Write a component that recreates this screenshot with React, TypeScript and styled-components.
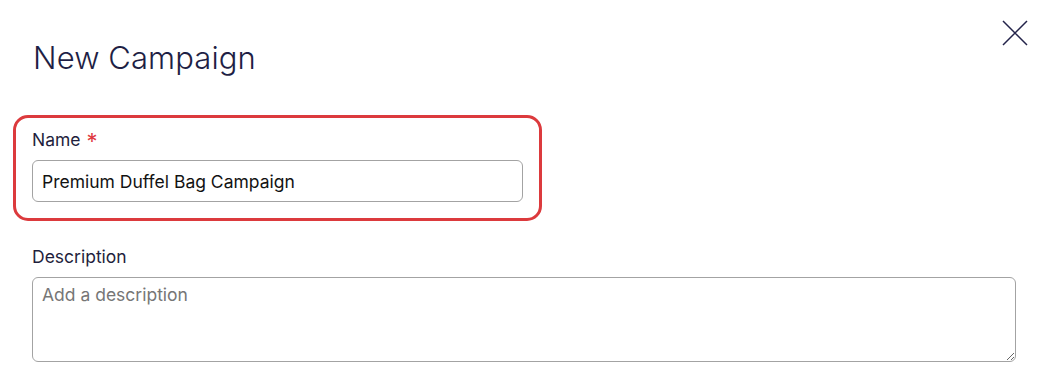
import styled, { createGlobalStyle } from "styled-components";

const GlobalStyle = createGlobalStyle`
  body {
    margin: 0;
    background: #ffffff;
    font-family: Inter, "Noto Sans", sans-serif;
    color: #1c1c3c;
  }
`;

const Dialog = styled.div`
  width: 1048px;
  height: 373px;
  box-sizing: border-box;
  padding: 0 32px 0 13px;
  position: relative;
  overflow: hidden;
`;

const Title = styled.h1`
  margin: 0;
  padding: 34px 0 0 20px;
  font-size: 31px;
  font-weight: 300;
  line-height: 48px;
  color: #1f1f45;
  letter-spacing: 0.1px;
`;

const CloseButton = styled.button`
  position: absolute;
  top: 19px;
  right: 19px;
  width: 28px;
  height: 28px;
  padding: 0;
  border: none;
  background: none;
  display: flex;
  align-items: center;
  justify-content: center;
  cursor: pointer;
`;

const Field = styled.div<{ $highlight?: boolean }>`
  display: flex;
  flex-direction: column;
  gap: 8px;
  box-sizing: border-box;
  width: ${(p) => (p.$highlight ? "529px" : "auto")};
  padding: ${(p) => (p.$highlight ? "10px 16px 16px 16px" : "0 0 0 19px")};
  border: ${(p) => (p.$highlight ? "3px solid #dc3a3d" : "none")};
  border-radius: 15px;
  margin-top: ${(p) => (p.$highlight ? "33px" : "24px")};
`;

const Label = styled.label`
  font-size: 17.5px;
  line-height: 24px;
  color: #1f1f3d;
  display: flex;
  gap: 6px;
  align-items: center;
`;

const Required = styled.span`
  color: #e0393e;
  font-size: 22px;
  line-height: 16px;
  position: relative;
  top: 1px;
`;

const TextInput = styled.input`
  height: 42px;
  box-sizing: border-box;
  border: 1px solid #a3a3a3;
  border-radius: 6px;
  padding: 0 9px;
  font-family: Inter, "Noto Sans", sans-serif;
  font-size: 17.5px;
  color: #121212;
  outline: none;
`;

const TextArea = styled.textarea`
  height: 85px;
  box-sizing: border-box;
  border: 1px solid #a3a3a3;
  border-radius: 6px;
  padding: 7px 9px;
  font-family: Inter, "Noto Sans", sans-serif;
  font-size: 17.5px;
  line-height: 20px;
  color: #121212;
  resize: vertical;
  outline: none;
  &::placeholder {
    color: #767676;
  }
`;

export default function App() {
  return (
    <>
      <GlobalStyle />
      <Dialog>
        <Title>New Campaign</Title>
        <CloseButton aria-label="Close">
          <svg width="26" height="26" viewBox="0 0 26 26" fill="none">
            <path d="M1 1L25 25M25 1L1 25" stroke="#23234a" strokeWidth="1.5" />
          </svg>
        </CloseButton>
        <Field $highlight>
          <Label>
            Name <Required>*</Required>
          </Label>
          <TextInput defaultValue="Premium Duffel Bag Campaign" />
        </Field>
        <Field>
          <Label>Description</Label>
          <TextArea placeholder="Add a description" />
        </Field>
      </Dialog>
    </>
  );
}
